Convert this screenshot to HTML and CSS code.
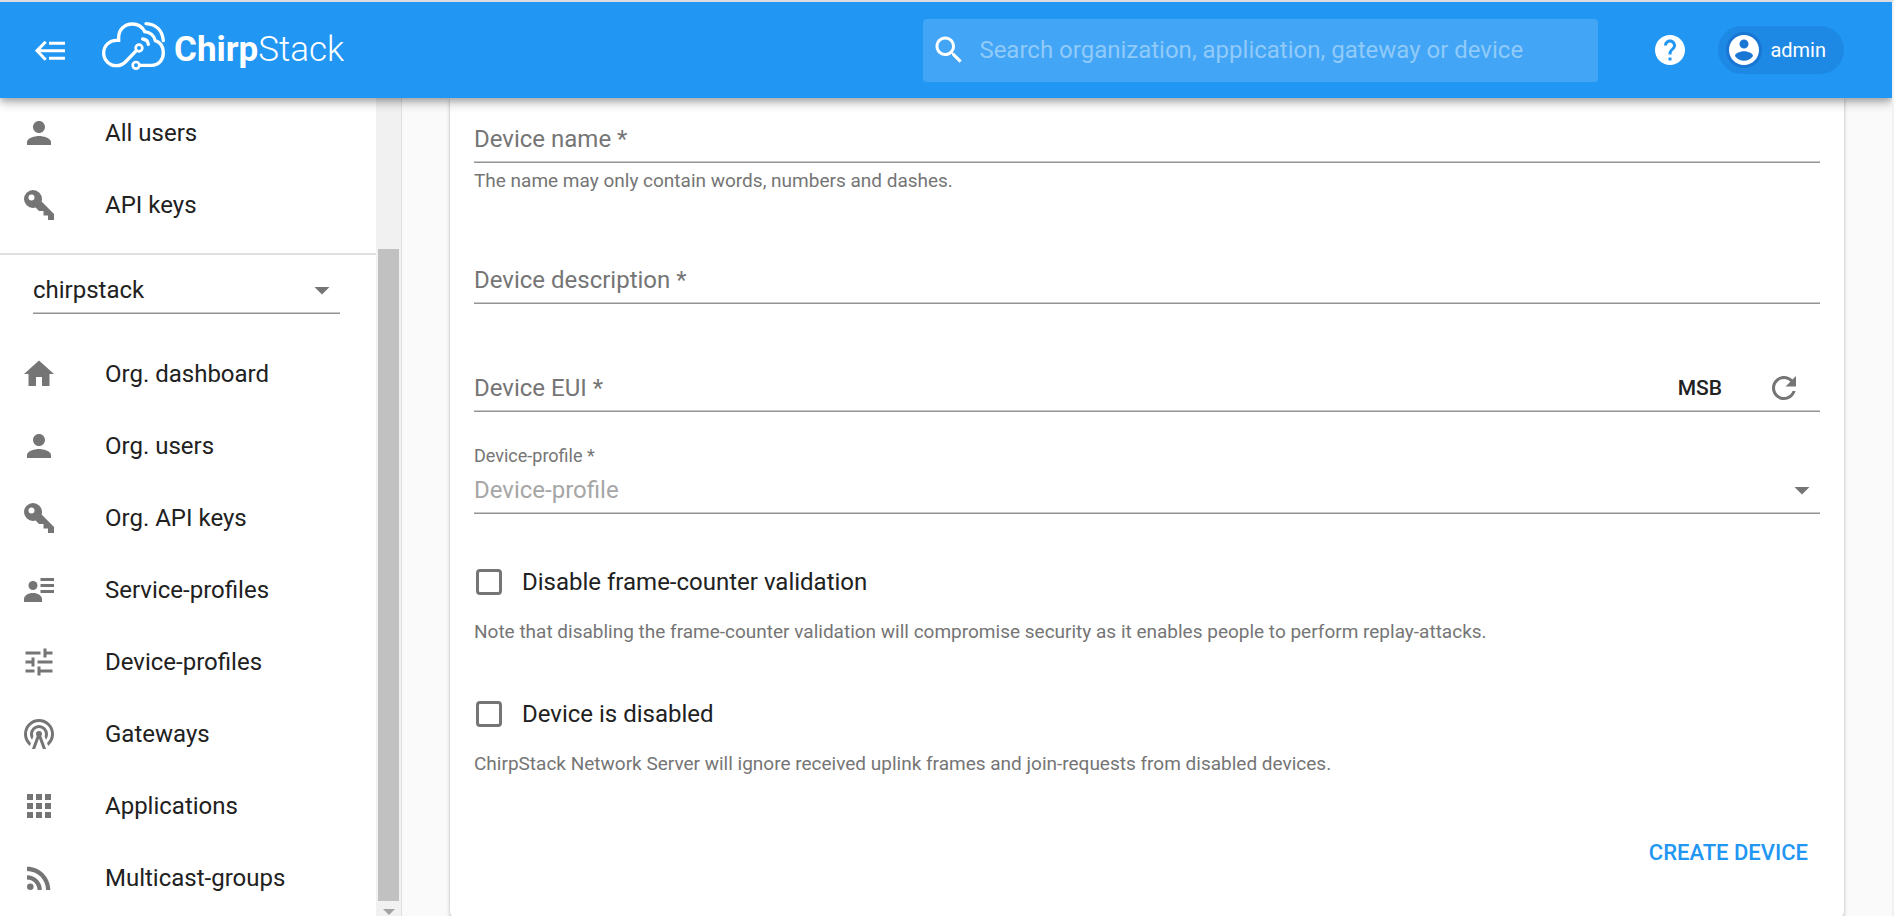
FILE: index.html
```html
<!DOCTYPE html>
<html lang="en">
<head>
<meta charset="utf-8">
<title>ChirpStack Application Server</title>
<link rel="stylesheet" href="styles.css">
</head>
<body class="page">
<header class="topbar">
  <button class="icon-button menu-toggle" type="button" aria-label="Toggle menu">
    <svg width="30" height="21" viewBox="105 118 90 63" fill="none" stroke="currentColor" stroke-width="9"><path d="M195 150H110M137 123L111 150L137 177M147 128H195M147 173H195"/></svg>
  </button>
  <a class="brand" href="#">
    <svg width="65" height="51" viewBox="303 60 195 153" fill="none" stroke="currentColor" stroke-width="10"><path stroke-linecap="round" d="M409 152L376 186C369 193 361 197 349 197C328 197 311 180 311 159C311 137 329 121 349 121H356V112C356 89 374 72 397 72C415 72 428 82 434 95C449 96 462 106 466 122C481 127 490 141 490 159C490 180 475 196 455 196H420M438 71C468 73 487 91 490 122M428 117C438 118 444 123 445 133"/><circle cx="417" cy="144" r="10" stroke-width="8"/><circle cx="408" cy="196" r="10" stroke-width="8"/></svg>
    <span class="brand-name"><b class="brand-strong">Chirp</b><span class="brand-light">Stack</span></span>
  </a>
  <label class="search">
    <svg class="icon" viewBox="0 0 24 24"><path d="M15.5 14h-.79l-.28-.27C15.41 12.59 16 11.11 16 9.5 16 5.91 13.09 3 9.5 3S3 5.91 3 9.5 5.91 16 9.5 16c1.61 0 3.09-.59 4.23-1.57l.27.28v.79l5 4.99L20.49 19l-4.99-5zm-6 0C7.01 14 5 11.99 5 9.5S7.01 5 9.5 5 14 7.01 14 9.5 11.99 14 9.5 14z"/></svg>
    <input class="search-input" type="text" aria-label="Search" placeholder="Search organization, application, gateway or device">
  </label>
  <a class="help" href="#" aria-label="Help"><svg class="icon" viewBox="0 0 24 24"><path d="M12 2C6.48 2 2 6.48 2 12s4.48 10 10 10 10-4.480 10-10S17.520 2 12 2zm1 17h-2v-2h2v2zm2.070-7.750l-.9.920C13.450 12.900 13 13.500 13 15h-2v-.5c0-1.100.45-2.100 1.170-2.830l1.240-1.260c.37-.36.590-.86.590-1.410 0-1.100-.9-2-2-2s-2 .9-2 2H8c0-2.210 1.790-4 4-4s4 1.790 4 4c0 .88-.36 1.680-.93 2.250z"/></svg></a>
  <button class="account" type="button">
    <span class="avatar"><svg class="icon" viewBox="0 0 24 24"><path d="M12 2C6.480 2 2 6.480 2 12s4.480 10 10 10 10-4.480 10-10S17.520 2 12 2zm0 3c1.660 0 3 1.340 3 3s-1.340 3-3 3-3-1.340-3-3 1.340-3 3-3zm0 14.200c-2.500 0-4.710-1.280-6-3.220.03-1.990 4-3.080 6-3.080 1.990 0 5.970 1.090 6 3.080-1.290 1.940-3.500 3.220-6 3.220z"/></svg></span>
    <span>admin</span>
  </button>
</header>

<div class="layout">
  <aside class="sidebar">
    <nav class="nav">
      <div class="nav-group nav-global">
        <a class="nav-item" href="#"><svg class="icon" viewBox="0 0 24 24"><path d="M12 12c2.210 0 4-1.790 4-4s-1.790-4-4-4-4 1.790-4 4 1.790 4 4 4zm0 2c-2.670 0-8 1.340-8 4v2h16v-2c0-2.660-5.330-4-8-4z"/></svg>All users</a>
        <a class="nav-item" href="#"><svg class="icon" viewBox="0 0 24 24"><path d="M22,18V22H18V19H15V16H12L9.740,13.740C9.190,13.910 8.610,14 8,14A6,6 0 0,1 2,8A6,6 0 0,1 8,2A6,6 0 0,1 14,8C14,8.610 13.910,9.190 13.740,9.740L22,18M7,5A2,2 0 0,0 5,7A2,2 0 0,0 7,9A2,2 0 0,0 9,7A2,2 0 0,0 7,5Z"/></svg>API keys</a>
      </div>
      <div class="org-picker select-box">
        <select class="select" aria-label="Organization"><option>chirpstack</option></select>
        <svg class="icon select-arrow" viewBox="0 0 24 24"><path d="M7 10l5 5 5-5z"/></svg>
      </div>
      <div class="nav-group">
        <a class="nav-item" href="#"><svg class="icon" viewBox="0 0 24 24"><path d="M10 20v-6h4v6h5v-8h3L12 3 2 12h3v8z"/></svg>Org. dashboard</a>
        <a class="nav-item" href="#"><svg class="icon" viewBox="0 0 24 24"><path d="M12 12c2.210 0 4-1.790 4-4s-1.790-4-4-4-4 1.790-4 4 1.790 4 4 4zm0 2c-2.670 0-8 1.340-8 4v2h16v-2c0-2.660-5.330-4-8-4z"/></svg>Org. users</a>
        <a class="nav-item" href="#"><svg class="icon" viewBox="0 0 24 24"><path d="M22,18V22H18V19H15V16H12L9.740,13.740C9.190,13.910 8.610,14 8,14A6,6 0 0,1 2,8A6,6 0 0,1 8,2A6,6 0 0,1 14,8C14,8.610 13.910,9.190 13.740,9.740L22,18M7,5A2,2 0 0,0 5,7A2,2 0 0,0 7,9A2,2 0 0,0 9,7A2,2 0 0,0 7,5Z"/></svg>Org. API keys</a>
        <a class="nav-item" href="#"><svg class="icon" viewBox="0 0 24 24"><circle cx="8" cy="9" r="3"/><path d="M8 14C11.300 14 14 15.800 14 18V20H2V18C2 15.800 4.700 14 8 14ZM13 4H22V6H13ZM13 8H22V10H13ZM13 12H22V14H13Z"/></svg>Service-profiles</a>
        <a class="nav-item" href="#"><svg class="icon" viewBox="0 0 24 24"><path d="M3 17v2h6v-2H3zM3 5v2h10V5H3zm10 16v-2h8v-2h-8v-2h-2v6h2zM7 9v2H3v2h4v2h2V9H7zm14 4v-2H11v2h10zm-6-4h2V7h4V5h-4V3h-2v6z"/></svg>Device-profiles</a>
        <a class="nav-item" href="#"><svg class="icon" viewBox="0 0 24 24"><path d="M12,10A2,2 0 0,1 14,12C14,12.500 13.820,12.940 13.530,13.290L16.700,22H14.570L12,14.930L9.430,22H7.300L10.470,13.290C10.180,12.940 10,12.500 10,12A2,2 0 0,1 12,10M12,8A4,4 0 0,0 8,12C8,12.500 8.100,13 8.280,13.460L7.400,15.860C6.530,14.810 6,13.470 6,12A6,6 0 0,1 12,6A6,6 0 0,1 18,12C18,13.470 17.470,14.810 16.600,15.860L15.720,13.460C15.900,13 16,12.500 16,12A4,4 0 0,0 12,8M12,4A8,8 0 0,0 4,12C4,14.360 5,16.500 6.640,17.940L5.920,19.940C3.540,18.110 2,15.230 2,12A10,10 0 0,1 12,2A10,10 0 0,1 22,12C22,15.230 20.460,18.110 18.080,19.940L17.360,17.940C19,16.500 20,14.360 20,12A8,8 0 0,0 12,4Z"/></svg>Gateways</a>
        <a class="nav-item" href="#"><svg class="icon" viewBox="0 0 24 24"><path d="M4 8h4V4H4v4zm6 12h4v-4h-4v4zm-6 0h4v-4H4v4zm0-6h4v-4H4v4zm6 0h4v-4h-4v4zm6-10v4h4V4h-4zm-6 4h4V4h-4v4zm6 6h4v-4h-4v4zm0 6h4v-4h-4v4z"/></svg>Applications</a>
        <a class="nav-item" href="#"><svg class="icon" viewBox="0 0 24 24"><circle cx="6.180" cy="17.820" r="2.180"/><path d="M4 4.440v2.830c7.030 0 12.730 5.700 12.730 12.730h2.830c0-8.590-6.970-15.560-15.560-15.560zm0 5.660v2.830c3.900 0 7.070 3.170 7.070 7.070h2.830c0-5.470-4.430-9.900-9.900-9.900z"/></svg>Multicast-groups</a>
      </div>
    </nav>
    <div class="scrollbar" aria-hidden="true">
      <div class="scroll-thumb"></div>
      <svg class="scroll-arrow" width="12" height="6" viewBox="0 0 12 6"><path d="M0 0H12L6 6Z"/></svg>
    </div>
  </aside>

  <main class="main">
    <form class="card">
      <div class="field field-name">
        <div class="control">
          <label class="field-label" for="name">Device name *</label>
          <input class="field-input" id="name" type="text">
        </div>
        <p class="hint">The name may only contain words, numbers and dashes.</p>
      </div>
      <div class="field field-description">
        <div class="control">
          <label class="field-label" for="description">Device description *</label>
          <input class="field-input" id="description" type="text">
        </div>
      </div>
      <div class="field field-eui">
        <div class="control">
          <label class="field-label" for="eui">Device EUI *</label>
          <input class="field-input" id="eui" type="text">
          <div class="adornment">
            <button class="byte-order" type="button">MSB</button>
            <button class="icon-button refresh" type="button" aria-label="Generate random ID"><svg class="icon" viewBox="0 0 24 24"><path d="M17.650 6.350C16.200 4.900 14.210 4 12 4c-4.420 0-7.990 3.580-7.990 8s3.570 8 7.990 8c3.730 0 6.840-2.550 7.730-6h-2.080c-.82 2.330-3.040 4-5.650 4-3.310 0-6-2.690-6-6s2.690-6 6-6c1.660 0 3.140.69 4.220 1.780L13 11h7V4l-2.350 2.350z"/></svg></button>
          </div>
        </div>
      </div>
      <div class="field">
        <label class="small-label" for="profile">Device-profile *</label>
        <div class="select-box">
          <select class="select select-empty" id="profile"><option>Device-profile</option></select>
          <svg class="icon select-arrow" viewBox="0 0 24 24"><path d="M7 10l5 5 5-5z"/></svg>
        </div>
      </div>
      <div class="options">
        <div class="option">
          <label class="check"><input class="check-box" type="checkbox">Disable frame-counter validation</label>
          <p class="hint option-hint">Note that disabling the frame-counter validation will compromise security as it enables people to perform replay-attacks.</p>
        </div>
        <div class="option">
          <label class="check"><input class="check-box" type="checkbox">Device is disabled</label>
          <p class="hint option-hint">ChirpStack Network Server will ignore received uplink frames and join-requests from disabled devices.</p>
        </div>
      </div>
      <div class="actions"><button class="submit" type="submit">Create device</button></div>
    </form>
  </main>
</div>
</body>
</html>
```
FILE: styles.css
```css
* { box-sizing: border-box; }

.page {
  margin: 0;
  height: 100vh;
  overflow: hidden;
  display: flex;
  flex-direction: column;
  border-top: 2px solid #dadce0;
  border-right: 2px solid #f1f1f1;
  background: #fafafa;
  color: #212121;
  font-family: Roboto, "Liberation Sans", sans-serif;
  font-size: 24px;
  line-height: 36px;
}

button, input, select { font: inherit; color: inherit; margin: 0; padding: 0; border: 0; background: none; }
button { cursor: pointer; }
a { color: inherit; text-decoration: none; }

.icon { width: 36px; height: 36px; flex: none; display: block; fill: currentColor; }
.icon-button { display: flex; }

/* Top bar */
.topbar {
  flex: none;
  height: 96px;
  display: flex;
  align-items: center;
  padding: 0 48px 0 35px;
  background: #2196f3;
  color: #fff;
  z-index: 1;
  box-shadow: 0 3px 6px -1px rgba(0,0,0,.2), 0 6px 8px rgba(0,0,0,.14), 0 2px 15px rgba(0,0,0,.12);
}
.brand { display: flex; align-items: center; gap: 8px; margin-left: 36px; padding-bottom: 10px; }
.brand-name { font-size: 35px; line-height: 42px; padding-top: 10px; }
.brand-strong { font-weight: 700; }
.brand-light { font-weight: 300; }
.search {
  width: 675px;
  height: 63px;
  margin-left: auto;
  padding: 0 12px 0 8px;
  display: flex;
  align-items: center;
  gap: 12px;
  border-radius: 4px;
  background: #42a5f5;
}
.search-input { flex: 1; min-width: 0; height: 36px; outline: none; }
.search-input::placeholder { color: #90caf9; opacity: 1; }
.help { margin: 0 30px 0 54px; }
.account {
  height: 48px;
  display: flex;
  align-items: center;
  gap: 8px;
  padding: 0 18px 0 8px;
  border-radius: 24px;
  background: #1e88e5;
  font-size: 20px;
}
.avatar { border-radius: 50%; background: #1976d2; }

/* Layout */
.layout { flex: 1; min-height: 0; display: flex; overflow: hidden; }
.sidebar { flex: none; width: 402px; display: flex; border-right: 1px solid #e0e0e0; background: #fff; }
.nav { flex: 1; min-width: 0; display: flex; flex-direction: column; justify-content: flex-end; padding-bottom: 2px; overflow: hidden; }
.nav-group { display: flex; flex-direction: column; }
.nav-global { padding-bottom: 12px; border-bottom: 2px solid #e0e0e0; }
.nav-item { flex: none; height: 72px; display: flex; align-items: center; gap: 48px; padding-left: 21px; }
.nav-item .icon, .select-arrow, .refresh { color: #757575; }
.org-picker { margin: 12px 36px 24px 33px; }

.scrollbar { width: 25px; flex: none; display: flex; flex-direction: column; align-items: center; padding: 151px 2px 1px; background: #f1f1f1; }
.scroll-thumb { flex: 1; align-self: stretch; background: #c1c1c1; }
.scroll-arrow { flex: none; margin-top: 8px; fill: #a3a3a3; }

/* Form card */
.main { flex: 1; min-width: 0; padding: 0 48px; }
.card {
  display: flex;
  flex-direction: column;
  padding: 17px 24px 38px;
  background: #fff;
  border-radius: 0 0 6px 6px;
  box-shadow: 0 2px 2px rgba(0,0,0,.14), 0 1px 4px rgba(0,0,0,.2);
}
.field { display: flex; flex-direction: column; }
.field-name { margin-bottom: 63px; }
.field-description { margin-bottom: 60px; }
.field-eui { margin-bottom: 34px; }
.control, .select-box {
  display: grid;
  align-items: center;
  height: 48px;
  border-bottom: 1px solid #949494;
  box-shadow: inset 0 -1px #c8c8c8;
}
.control > *, .select-box > * { grid-area: 1 / 1; }
.field-label { color: #757575; }
.field-input { width: 100%; height: 46px; outline: none; }
.adornment { justify-self: end; display: flex; align-items: center; gap: 44px; padding-right: 18px; }
.byte-order { font-size: 21px; font-weight: 500; }
.select { width: 100%; height: 46px; appearance: none; outline: none; }
.select-empty { color: #a6a6a6; }
.select-arrow { justify-self: end; pointer-events: none; }
.small-label { font-size: 18px; line-height: 20px; color: #757575; }
.hint { margin: 6px 0 0; font-size: 19px; line-height: 24px; color: #757575; }

.options { display: flex; flex-direction: column; gap: 52px; margin: 50px 0; }
.check { display: flex; align-items: center; gap: 20px; padding-left: 2px; }
.check-box { appearance: none; width: 26px; height: 26px; border: 3px solid #757575; border-radius: 4px; }
.option-hint { margin-top: 20px; }

.actions { display: flex; justify-content: flex-end; }
.submit { height: 54px; padding: 0 12px; font-size: 22px; font-weight: 500; text-transform: uppercase; color: #2196f3; }
```
